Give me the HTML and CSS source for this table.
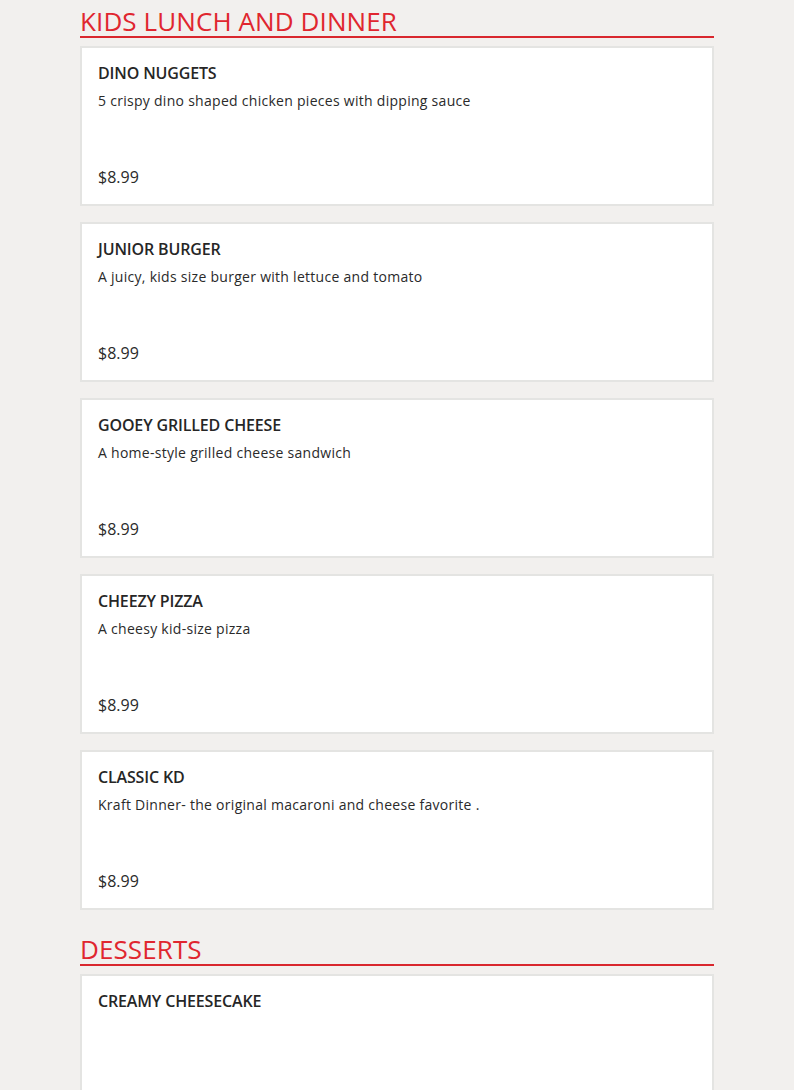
FILE: index.html
```html
<!DOCTYPE html>
<html lang="en">
<head>
<meta charset="utf-8">
<title>Menu</title>
<link rel="stylesheet" href="styles.css">
</head>
<body>
<main class="menu">
  <section class="section">
    <h2 class="section-title">KIDS LUNCH AND DINNER</h2>
    <div class="items">
      <article class="item">
        <h3 class="item-name">DINO NUGGETS</h3>
        <p class="item-desc">5 crispy dino shaped chicken pieces with dipping sauce</p>
        <p class="item-price">$8.99</p>
      </article>
      <article class="item">
        <h3 class="item-name">JUNIOR BURGER</h3>
        <p class="item-desc">A juicy, kids size burger with lettuce and tomato</p>
        <p class="item-price">$8.99</p>
      </article>
      <article class="item">
        <h3 class="item-name">GOOEY GRILLED CHEESE</h3>
        <p class="item-desc">A home-style grilled cheese sandwich</p>
        <p class="item-price">$8.99</p>
      </article>
      <article class="item">
        <h3 class="item-name">CHEEZY PIZZA</h3>
        <p class="item-desc">A cheesy kid-size pizza</p>
        <p class="item-price">$8.99</p>
      </article>
      <article class="item">
        <h3 class="item-name">CLASSIC KD</h3>
        <p class="item-desc">Kraft Dinner- the original macaroni and cheese favorite .</p>
        <p class="item-price">$8.99</p>
      </article>
    </div>
  </section>
  <section class="section">
    <h2 class="section-title">DESSERTS</h2>
    <div class="items">
      <article class="item">
        <h3 class="item-name">CREAMY CHEESECAKE</h3>
        <p class="item-desc"></p>
        <p class="item-price"></p>
      </article>
    </div>
  </section>
</main>
</body>
</html>
```

FILE: styles.css
```css
html, body {
  margin: 0;
  padding: 0;
}
body {
  background: #f2f0ee;
  font-family: "Open Sans", "Liberation Sans", sans-serif;
  color: #222;
}
.menu {
  width: 634px;
  margin: 0 auto;
  padding-top: 6px;
}
.section + .section {
  margin-top: 24px;
}
.section-title {
  margin: 0 0 8px;
  font-size: 26px;
  font-weight: 400;
  line-height: 30px;
  letter-spacing: 0.1px;
  color: #e0262f;
  border-bottom: 2px solid #d9272e;
}
.items {
  display: flex;
  flex-direction: column;
  gap: 16px;
}
.item {
  box-sizing: border-box;
  height: 160px;
  background: #fff;
  border: 2px solid #e4e4e2;
  padding: 16px;
  display: flex;
  flex-direction: column;
}
.item-name {
  margin: 0 0 7px;
  font-size: 16px;
  font-weight: 600;
  line-height: 19px;
  letter-spacing: -0.15px;
  color: #262626;
}
.item-desc {
  margin: 0;
  font-size: 14px;
  line-height: 21px;
  letter-spacing: 0.28px;
  color: #2a2a2a;
}
.item-price {
  margin: auto 0 1px;
  font-size: 16px;
  line-height: 20px;
  color: #2a2a2a;
}
```
